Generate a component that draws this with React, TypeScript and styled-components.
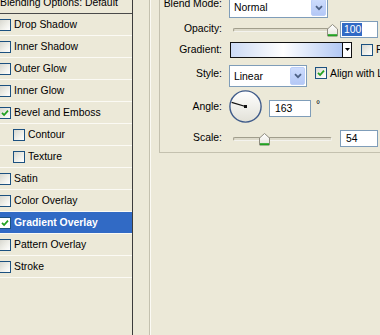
import React from "react";
import styled, { createGlobalStyle } from "styled-components";

const GlobalStyle = createGlobalStyle`
  html, body {
    margin: 0;
    padding: 0;
    background: #ece9d8;
  }
  body {
    font-family: "Liberation Sans", Arial, sans-serif;
    font-size: 10.4px;
    color: #000;
  }
`;

type LayerStyle = { name: string; checked: boolean; indent?: boolean; active?: boolean };

const styles: LayerStyle[] = [
  { name: "Drop Shadow", checked: false },
  { name: "Inner Shadow", checked: false },
  { name: "Outer Glow", checked: false },
  { name: "Inner Glow", checked: false },
  { name: "Bevel and Emboss", checked: true },
  { name: "Contour", checked: false, indent: true },
  { name: "Texture", checked: false, indent: true },
  { name: "Satin", checked: false },
  { name: "Color Overlay", checked: false },
  { name: "Gradient Overlay", checked: true, active: true },
  { name: "Pattern Overlay", checked: false },
  { name: "Stroke", checked: false },
];

const Screen = styled.div`
  width: 380px;
  height: 335px;
  overflow: hidden;
  display: flex;
  background: #ece9d8;
`;

const StyleList = styled.div`
  width: 132px;
  flex: none;
  border-right: 1px solid #3c3c3c;
  display: flex;
  flex-direction: column;
`;

const ListHeader = styled.div`
  height: 22px;
  margin-top: -8px;
  box-sizing: border-box;
  border-bottom: 1px solid #4a4a4a;
  display: flex;
  align-items: center;
  white-space: nowrap;
`;

const ListRow = styled.div<{ $indent?: boolean; $active?: boolean }>`
  height: 22px;
  box-sizing: border-box;
  border-bottom: 1px solid #fbfaf4;
  display: flex;
  align-items: center;
  gap: 3px;
  padding-left: ${(p) => (p.$indent ? 14 : 0)}px;
  background: ${(p) => (p.$active ? "#316ac5" : "transparent")};
  color: ${(p) => (p.$active ? "#fff" : "#000")};
  font-weight: ${(p) => (p.$active ? 700 : 400)};
  white-space: nowrap;
`;

const Box = styled.span<{ $white?: boolean }>`
  width: 12px;
  height: 12px;
  flex: none;
  margin-left: -1px;
  box-sizing: border-box;
  border: 1px solid #1c5180;
  background: ${(p) =>
    p.$white ? "#fff" : "linear-gradient(135deg, #d8d8d0 0%, #efefe9 55%, #ffffff 100%)"};
  display: flex;
  align-items: center;
  justify-content: center;
`;

const Workspace = styled.div`
  flex: none;
  padding-left: 16px;
  display: flex;
`;

const OuterFrame = styled.div`
  width: 300px;
  border-left: 1px solid #c4c1af;
  box-shadow: inset 1px 0 #fbfaf4;
  padding-left: 9px;
`;

const InnerFrame = styled.div`
  width: 280px;
  margin-top: -3px;
  border-left: 1px solid #c4c1af;
  border-bottom: 1px solid #c4c1af;
  padding-bottom: 5px;
  display: flex;
  flex-direction: column;
`;

const FieldRow = styled.div<{ $h: number; $gap: number }>`
  display: flex;
  align-items: center;
  height: ${(p) => p.$h}px;
  margin-top: ${(p) => p.$gap}px;
  white-space: nowrap;
`;

const FieldLabel = styled.span<{ $lift?: number }>`
  width: 62px;
  flex: none;
  margin-right: 7px;
  text-align: right;
  margin-bottom: ${(p) => (p.$lift ?? 0) * 2}px;
`;

const Select = styled.div<{ $w: number; $h: number }>`
  width: ${(p) => p.$w}px;
  height: ${(p) => p.$h}px;
  flex: none;
  box-sizing: border-box;
  border: 1px solid #7f9db9;
  background: #fff;
  padding: 1px;
  display: flex;
  align-items: center;
  justify-content: space-between;
`;

const SelectValue = styled.span`
  padding-left: 3px;
`;

const DropButton = styled.span`
  width: 15px;
  align-self: stretch;
  box-sizing: border-box;
  border-radius: 2px;
  border: 1px solid #bccff9;
  background: linear-gradient(#cddcfd, #b4c8f6);
  display: flex;
  align-items: center;
  justify-content: center;
`;

const SliderBox = styled.div<{ $w: number }>`
  position: relative;
  width: ${(p) => p.$w}px;
  height: 100%;
  flex: none;
  display: flex;
  align-items: center;
`;

const Track = styled.div`
  flex: 1;
  margin: 0 4px;
  height: 2px;
  border-radius: 2px;
  border: 1px solid;
  border-color: #a19e8c #f4f3ee #f4f3ee #a19e8c;
  background: #dedbcb;
`;

const ThumbMark = styled.svg`
  position: absolute;
  top: 50%;
  margin-top: -6px;
`;

const NumberField = styled.div<{ $w: number; $top?: number }>`
  width: ${(p) => p.$w}px;
  height: 17px;
  flex: none;
  box-sizing: border-box;
  border: 1px solid #7f9db9;
  background: #fff;
  padding-left: 5px;
  display: flex;
  align-items: center;
  align-self: ${(p) => (p.$top !== undefined ? "flex-start" : "center")};
  margin-top: ${(p) => p.$top ?? 0}px;
`;

const Selection = styled.span`
  margin-left: -4px;
  padding: 1px 1px 1px 2px;
  background: #316ac5;
  color: #fff;
`;

const GradientPicker = styled.div`
  width: 122px;
  height: 16px;
  flex: none;
  margin-left: 1px;
  box-sizing: border-box;
  border: 1px solid #111;
  display: flex;
`;

const GradientSwatch = styled.div`
  flex: 1;
  background: linear-gradient(90deg, #ccdaf5 0%, #ffffff 47%, #b2c8f3 100%);
`;

const GradientArrow = styled.div`
  width: 8px;
  border-left: 1px solid #111;
  background: #fff;
  display: flex;
  align-items: center;
  justify-content: center;
`;

const CheckField = styled.span<{ $gap: number; $lift?: number }>`
  display: flex;
  align-items: center;
  gap: 3px;
  margin-left: ${(p) => p.$gap}px;
  margin-bottom: ${(p) => (p.$lift ?? 0) * 2}px;
`;

const Dial = styled.svg`
  flex: none;
`;

const Degree = styled.span`
  align-self: flex-start;
  margin-top: 9px;
  margin-left: 5px;
`;

const Check = () => (
  <svg width="8" height="8" viewBox="0 0 8 8">
    <path d="M1 3.8 L3.1 6 L7 1.6" fill="none" stroke="#21a121" strokeWidth="1.8" />
  </svg>
);

const CheckBox = ({ checked, white }: { checked: boolean; white?: boolean }) => (
  <Box $white={white}>{checked && <Check />}</Box>
);

const Chevron = () => (
  <svg width="8" height="6" viewBox="0 0 8 6">
    <path d="M1 1.2 L4 4.2 L7 1.2" fill="none" stroke="#4d6185" strokeWidth="1.8" />
  </svg>
);

const Slider = ({ pct, width }: { pct: number; width: number }) => {
  const left = 4 + pct * (width - 8) - 5.5;
  return (
    <SliderBox $w={width}>
      <Track />
      <ThumbMark width="11" height="13" viewBox="0 0 11 13" style={{ left }}>
        <defs>
          <linearGradient id="thumbFill" x1="0" y1="0" x2="0" y2="1">
            <stop offset="0" stopColor="#ffffff" />
            <stop offset="1" stopColor="#e6e5dc" />
          </linearGradient>
        </defs>
        <path
          d="M0.5 12 V5 L5.5 0.5 L10.5 5 V12 Z"
          fill="url(#thumbFill)"
          stroke="#8f8d80"
          strokeWidth="1"
        />
        <path d="M1 11.2 H10" stroke="#21a121" strokeWidth="2" />
      </ThumbMark>
    </SliderBox>
  );
};

const AngleDial = ({ angle }: { angle: number }) => {
  const c = 16.5;
  const r = 14.5;
  const rad = (angle * Math.PI) / 180;
  const x = c + Math.cos(rad) * r;
  const y = c - Math.sin(rad) * r;
  return (
    <Dial width="33" height="33" viewBox="0 0 33 33">
      <defs>
        <linearGradient id="dialFill" x1="0" y1="0" x2="0" y2="1">
          <stop offset="0" stopColor="#ffffff" />
          <stop offset="1" stopColor="#e2e1d8" />
        </linearGradient>
      </defs>
      <circle cx={c} cy={c} r="15.6" fill="url(#dialFill)" stroke="#3f5b8a" strokeWidth="1.4" />
      <line x1={c} y1={c} x2={x} y2={y} stroke="#111" strokeWidth="1.3" />
      <rect x={c - 1.5} y={c - 1.5} width="3" height="3" fill="#111" />
    </Dial>
  );
};

export default function App() {
  return (
    <>
      <GlobalStyle />
      <Screen>
        <StyleList>
          <ListHeader>Blending Options: Default</ListHeader>
          {styles.map((s) => (
            <ListRow key={s.name} $indent={s.indent} $active={s.active}>
              <CheckBox checked={s.checked} white={s.active} />
              {s.name}
            </ListRow>
          ))}
        </StyleList>

        <Workspace>
          <OuterFrame>
            <InnerFrame>
              <FieldRow $h={21} $gap={0}>
                <FieldLabel $lift={4}>Blend Mode:</FieldLabel>
                <Select $w={99} $h={21}>
                  <SelectValue>Normal</SelectValue>
                  <DropButton>
                    <Chevron />
                  </DropButton>
                </Select>
              </FieldRow>

              <FieldRow $h={17} $gap={3}>
                <FieldLabel $lift={1}>Opacity:</FieldLabel>
                <Slider pct={1} width={107} />
                <NumberField $w={38} style={{ marginLeft: 4 }}>
                  <Selection>100</Selection>
                </NumberField>
              </FieldRow>

              <FieldRow $h={17} $gap={3}>
                <FieldLabel>Gradient:</FieldLabel>
                <GradientPicker>
                  <GradientSwatch />
                  <GradientArrow>
                    <svg width="5" height="3" viewBox="0 0 5 3">
                      <path d="M0 0 H5 L2.5 3 Z" fill="#000" />
                    </svg>
                  </GradientArrow>
                </GradientPicker>
                <CheckField $gap={10}>
                  <CheckBox checked={false} />
                  Reverse
                </CheckField>
              </FieldRow>

              <FieldRow $h={22} $gap={7}>
                <FieldLabel $lift={3}>Style:</FieldLabel>
                <Select $w={78} $h={22}>
                  <SelectValue>Linear</SelectValue>
                  <DropButton>
                    <Chevron />
                  </DropButton>
                </Select>
                <CheckField $gap={9} $lift={3}>
                  <CheckBox checked />
                  Align with Layer
                </CheckField>
              </FieldRow>

              <FieldRow $h={33} $gap={3}>
                <FieldLabel>Angle:</FieldLabel>
                <AngleDial angle={163} />
                <NumberField $w={42} $top={10} style={{ marginLeft: 7 }}>
                  163
                </NumberField>
                <Degree>°</Degree>
              </FieldRow>

              <FieldRow $h={17} $gap={7}>
                <FieldLabel $lift={1}>Scale:</FieldLabel>
                <Slider pct={(54 - 10) / 140} width={107} />
                <NumberField $w={38} style={{ marginLeft: 4 }}>
                  54
                </NumberField>
              </FieldRow>
            </InnerFrame>
          </OuterFrame>
        </Workspace>
      </Screen>
    </>
  );
}
